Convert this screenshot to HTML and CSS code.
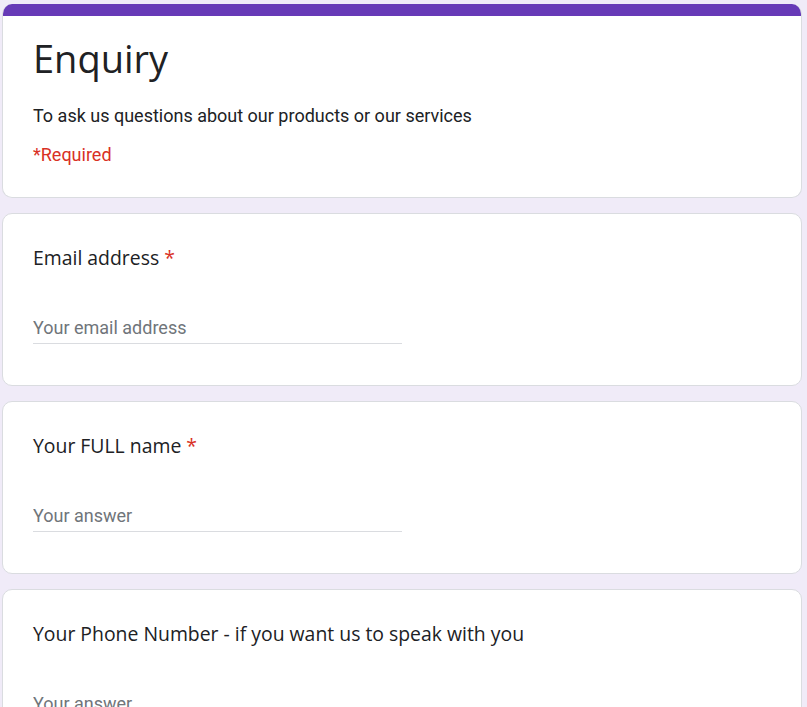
FILE: index.html
```html
<!DOCTYPE html>
<html lang="en">
<head>
    <meta charset="UTF-8">
    <meta name="viewport" content="width=device-width, initial-scale=1.0">
    <title>Enquiry</title>
    <link rel="stylesheet" href="styles.css">
</head>
<body>
    <div class="form">
        <!-- Header card -->
        <div class="card header-card">
            <div class="header-bar"></div>
            <div class="header-body">
                <h1 class="form-title">Enquiry</h1>
                <p class="form-desc">To ask us questions about our products or our services</p>
                <p class="required-note">*Required</p>
            </div>
        </div>

        <!-- Questions -->
        <div class="card question">
            <div class="question-title">Email address <span class="star">*</span></div>
            <input class="answer" type="email" placeholder="Your email address" aria-label="Your email address">
        </div>

        <div class="card question">
            <div class="question-title">Your FULL name <span class="star">*</span></div>
            <input class="answer" type="text" placeholder="Your answer" aria-label="Your FULL name">
        </div>

        <div class="card question">
            <div class="question-title">Your Phone Number - if you want us to speak with you</div>
            <input class="answer" type="tel" placeholder="Your answer" aria-label="Your Phone Number">
        </div>
    </div>
</body>
</html>
```

FILE: styles.css
```css
body {
    margin: 0;
    background: #f0ebf8;
    font-family: Roboto, Arial, sans-serif;
    color: #202124;
}
.form {
    width: 800px;
    margin: 4px 0 0 2px;
}
.card {
    background: #fff;
    border: 1px solid #dadce0;
    border-radius: 10px;
    margin-bottom: 15px;
}
.header-card {
    overflow: hidden;
    border-top: none;
}
.header-bar {
    height: 12px;
    background: #673ab7;
}
.header-body {
    padding: 18px 30px 30px;
}
.form-title {
    margin: 0;
    font-family: "Open Sans", sans-serif;
    font-weight: 400;
    font-size: 38px;
    line-height: 48px;
    color: #202124;
}
.form-desc {
    margin: 22px 0 0;
    font-size: 18px;
    line-height: 24px;
}
.required-note {
    margin: 15px 0 0;
    font-size: 18px;
    line-height: 24px;
    color: #d93025;
}
.question {
    padding: 29px 30px 41px;
}
.question-title {
    font-family: "Open Sans", sans-serif;
    font-size: 19.4px;
    line-height: 30px;
    color: #202124;
}
.star {
    color: #d93025;
}
.answer {
    display: block;
    width: 369px;
    margin-top: 44px;
    padding: 0 0 5px;
    border: none;
    border-bottom: 1px solid #dadce0;
    font-family: Roboto, Arial, sans-serif;
    font-size: 18px;
    color: #202124;
    outline: none;
    background: transparent;
}
.answer::placeholder {
    color: #70757a;
}
```
